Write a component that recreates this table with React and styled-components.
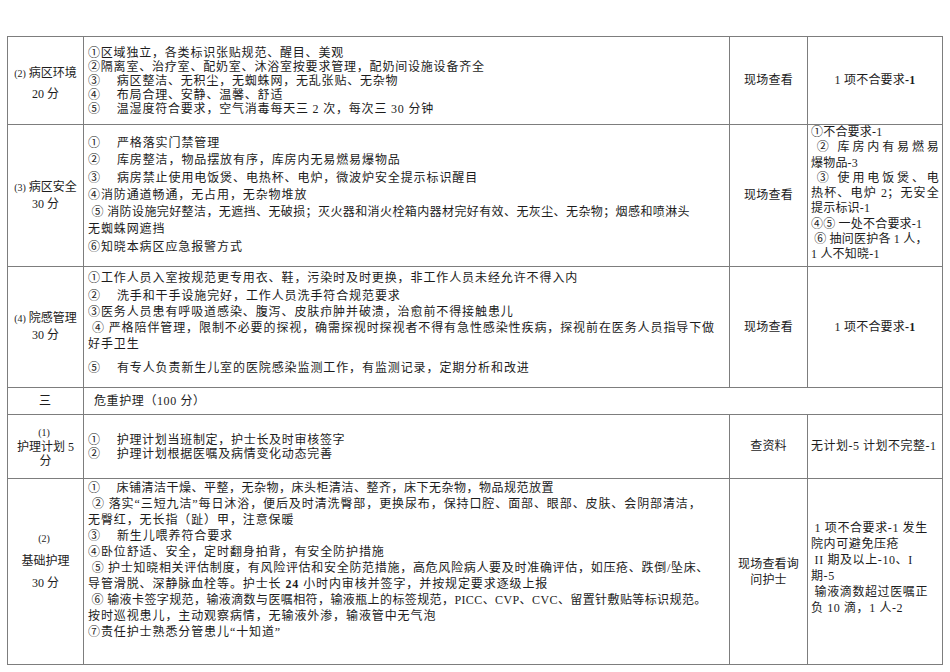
import React from "react";
import styled, { createGlobalStyle } from "styled-components";

const GlobalStyle = createGlobalStyle`
  html, body {
    margin: 0;
    padding: 0;
    background: #ffffff;
  }
  body {
    font-family: "Liberation Serif", "Noto Sans CJK SC", serif;
    color: #1c1c1c;
  }
`;

const Page = styled.div`
  width: 950px;
  height: 672px;
  overflow: hidden;
  box-sizing: border-box;
  padding: 36px 0 0 7px;
`;

const Table = styled.table`
  border-collapse: collapse;
  table-layout: fixed;
  width: 935px;
`;

const Row = styled.tr`
  height: ${p => p.$h}px;
`;

const Cell = styled.td`
  border: 1px solid #7d7d7d;
  padding: ${p => p.$pad || "0 4px"};
  vertical-align: ${p => p.$valign || "middle"};
  text-align: ${p => p.$align || "left"};
  font-size: 12px;
  line-height: ${p => p.$lh || 15}px;
  letter-spacing: ${p => (p.$ls !== undefined ? p.$ls : 0.9)}px;
  white-space: pre;
  overflow: hidden;
`;

const Line = styled.div`
  margin-bottom: ${p => p.$gap || 0}px;
  text-align: ${p => (p.$just ? "justify" : "inherit")};
  text-align-last: ${p => (p.$just ? "justify" : "auto")};
  ${p => (p.$ls !== undefined ? `letter-spacing: ${p.$ls}px;` : "")}
`;

const Tab = styled.span`
  display: inline-block;
  width: 16px;
`;

const Paren = styled.span`
  font-size: 10px;
  letter-spacing: 0;
  margin-right: 3px;
`;

const Bold = styled.b`
  font-weight: bold;
`;

const withTabs = s =>
  typeof s !== "string"
    ? s
    : s
        .split("\t")
        .flatMap((part, i) => (i === 0 ? [part] : [<Tab key={i} />, part]));

// an item is a string, a JSX fragment, or { text, just, ls }
const Lines = ({ items, gaps = [] }) =>
  items.map((it, i) => {
    const opts = it && typeof it === "object" && "text" in it ? it : { text: it };
    return (
      <Line key={i} $gap={gaps[i]} $just={opts.just} $ls={opts.ls}>
        {withTabs(opts.text)}
      </Line>
    );
  });

const rows = [
  {
    h: 88,
    label: [["(2)", "病区环境"], "20 分"],
    labelLh: 20,
    labelPad: "6px 2px 0",
    lh: 14,
    ls: 0.8,
    valign: "middle",
    pad: "0 4px",
    content: [
      "①区域独立，各类标识张贴规范、醒目、美观",
      "②隔离室、治疗室、配奶室、沐浴室按要求管理，配奶间设施设备齐全",
      "③\t病区整洁、无积尘，无蜘蛛网，无乱张贴、无杂物",
      "④\t布局合理、安静、温馨、舒适",
      "⑤\t温湿度符合要求，空气消毒每天三 2 次，每次三 30 分钟"
    ],
    method: ["现场查看"],
    score: [
      <>
        1 项不合要求<Bold>-1</Bold>
      </>
    ],
    scoreAlign: "center"
  },
  {
    h: 142,
    label: [["(3)", "病区安全"], "30 分"],
    labelLh: 16,
    lh: 17.3,
    ls: 0.9,
    valign: "top",
    pad: "10px 4px 0",
    content: [
      "①\t严格落实门禁管理",
      "②\t库房整洁，物品摆放有序，库房内无易燃易爆物品",
      "③\t病房禁止使用电饭煲、电热杯、电炉，微波炉安全提示标识醒目",
      "④消防通道畅通，无占用，无杂物堆放",
      {
        ls: 0.4,
        text: " ⑤ 消防设施完好整洁，无遮挡、无破损；灭火器和消火栓箱内器材完好有效、无灰尘、无杂物；烟感和喷淋头"
      },
      "无蜘蛛网遮挡",
      "⑥知晓本病区应急报警方式"
    ],
    method: ["现场查看"],
    score: [
      "①不合要求-1",
      { just: true, text: " ② 库房内有易燃易" },
      "爆物品-3",
      { just: true, text: " ③ 使用电饭煲、电" },
      { just: true, text: "热杯、电炉 2；无安全" },
      "提示标识-1",
      "④⑤ 一处不合要求-1",
      " ⑥ 抽问医护各 1 人，",
      "1 人不知晓-1"
    ],
    scoreLh: 15.25,
    scoreValign: "top",
    scoreAlign: "left"
  },
  {
    h: 121,
    label: [["(4)", "院感管理"], "30 分"],
    labelLh: 17,
    lh: 16,
    ls: 0.9,
    valign: "top",
    pad: "3px 4px 0",
    gaps: [2, 0, 0, 0, 8],
    content: [
      "①工作人员入室按规范更专用衣、鞋，污染时及时更换，非工作人员未经允许不得入内",
      "②\t洗手和干手设施完好，工作人员洗手符合规范要求",
      "③医务人员患有呼吸道感染、腹泻、皮肤疖肿并破溃，治愈前不得接触患儿",
      " ④ 严格陪伴管理，限制不必要的探视，确需探视时探视者不得有急性感染性疾病，探视前在医务人员指导下做",
      "好手卫生",
      "⑤\t有专人负责新生儿室的医院感染监测工作，有监测记录，定期分析和改进"
    ],
    method: ["现场查看"],
    score: [
      <>
        1 项不合要求<Bold>-1</Bold>
      </>
    ],
    scoreAlign: "center"
  }
];

const Label = ({ lines }) =>
  lines.map((l, i) => (
    <Line key={i}>
      {Array.isArray(l) ? (
        <>
          <Paren>{l[0]}</Paren>
          {l[1]}
        </>
      ) : (
        l
      )}
    </Line>
  ));

export default function App() {
  return (
    <>
      <GlobalStyle />
      <Page>
        <Table>
          <colgroup>
            <col style={{ width: 76 }} />
            <col style={{ width: 646 }} />
            <col style={{ width: 78 }} />
            <col style={{ width: 135 }} />
          </colgroup>
          <tbody>
            {rows.map((r, i) => (
              <Row key={i} $h={r.h}>
                <Cell
                  $align="center"
                  $lh={r.labelLh}
                  $ls={0}
                  $pad={r.labelPad || "0 2px"}
                >
                  <Label lines={r.label} />
                </Cell>
                <Cell $valign={r.valign} $pad={r.pad} $lh={r.lh} $ls={r.ls}>
                  <Lines items={r.content} gaps={r.gaps} />
                </Cell>
                <Cell $align="center" $ls={0.2}>
                  <Lines items={r.method} />
                </Cell>
                <Cell
                  $align={r.scoreAlign}
                  $valign={r.scoreValign}
                  $lh={r.scoreLh || 15}
                  $pad="0 3px"
                  $ls={0.2}
                >
                  <Lines items={r.score} />
                </Cell>
              </Row>
            ))}

            <Row $h={27}>
              <Cell $align="center">三</Cell>
              <Cell colSpan={3} $pad="0 10px" $ls={0.6}>
                危重护理（100 分）
              </Cell>
            </Row>

            <Row $h={64}>
              <Cell $align="center" $lh={14} $ls={0} $pad="0 2px">
                <Line>
                  <Paren>(1)</Paren>
                </Line>
                <Line>护理计划 5</Line>
                <Line>分</Line>
              </Cell>
              <Cell $lh={14} $pad="0 4px" $ls={0.7}>
                <Lines
                  items={[
                    "①\t护理计划当班制定，护士长及时审核签字",
                    "②\t护理计划根据医嘱及病情变化动态完善"
                  ]}
                />
              </Cell>
              <Cell $align="center" $ls={0.2}>
                查资料
              </Cell>
              <Cell $pad="0 3px" $ls={0.5}>
                无计划-5 计划不完整-1
              </Cell>
            </Row>

            <Row $h={186}>
              <Cell $align="center" $lh={22} $ls={0} $pad="0 2px 22px">
                <Line>
                  <Paren>(2)</Paren>
                </Line>
                <Line>基础护理</Line>
                <Line>30 分</Line>
              </Cell>
              <Cell $valign="top" $pad="1px 4px 0" $lh={16} $ls={0.9}>
                <Lines
                  items={[
                    {
                      ls: 0.5,
                      text: "①\t床铺清洁干燥、平整，无杂物，床头柜清洁、整齐，床下无杂物，物品规范放置"
                    },
                    " ② 落实“三短九洁”每日沐浴，便后及时清洗臀部，更换尿布，保持口腔、面部、眼部、皮肤、会阴部清洁，",
                    "无臀红，无长指（趾）甲，注意保暖",
                    "③\t新生儿喂养符合要求",
                    "④卧位舒适、安全，定时翻身拍背，有安全防护措施",
                    {
                      ls: 0.7,
                      text: " ⑤ 护士知晓相关评估制度，有风险评估和安全防范措施，高危风险病人要及时准确评估，如压疮、跌倒/坠床、"
                    },
                    <>
                      导管滑脱、深静脉血栓等。护士长 <Bold>24</Bold>{" "}
                      小时内审核并签字，并按规定要求逐级上报
                    </>,
                    {
                      ls: 0.4,
                      text: " ⑥ 输液卡签字规范，输液滴数与医嘱相符，输液瓶上的标签规范，PICC、CVP、CVC、留置针敷贴等标识规范。"
                    },
                    "按时巡视患儿，主动观察病情，无输液外渗，输液管中无气泡",
                    "⑦责任护士熟悉分管患儿“十知道”"
                  ]}
                />
              </Cell>
              <Cell $align="center" $lh={16} $ls={0.2}>
                <Line>现场查看询</Line>
                <Line>问护士</Line>
              </Cell>
              <Cell $lh={16} $pad="0 3px 8px" $ls={0.6}>
                <Lines
                  items={[
                    " 1 项不合要求-1 发生",
                    "院内可避免压疮",
                    " II 期及以上-10、I",
                    "期-5",
                    " 输液滴数超过医嘱正",
                    "负 10 滴，1 人-2"
                  ]}
                />
              </Cell>
            </Row>
          </tbody>
        </Table>
      </Page>
    </>
  );
}
